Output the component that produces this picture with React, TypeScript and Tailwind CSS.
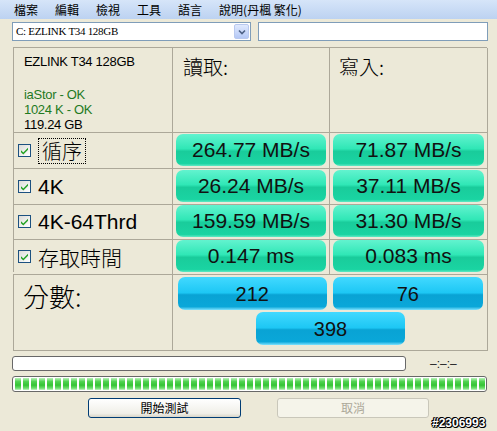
const SANS = "font-['Liberation_Sans','Noto_Sans_CJK_TC',sans-serif]"
const CJK = "font-['Noto_Sans_CJK_TC','Liberation_Sans',sans-serif]"

const rows = [
  { label: '循序', read: '264.77 MB/s', write: '71.87 MB/s', focus: true, cjk: true },
  { label: '4K', read: '26.24 MB/s', write: '37.11 MB/s' },
  { label: '4K-64Thrd', read: '159.59 MB/s', write: '31.30 MB/s' },
  { label: '存取時間', read: '0.147 ms', write: '0.083 ms', cjk: true },
]

const rowHeights = ['h-[36px]', 'h-[35px]', 'h-[35px]', 'h-[34px]']

function Check() {
  return (
    <span className="flex h-[13px] w-[13px] shrink-0 items-center justify-center border border-[#1c5180] bg-[linear-gradient(135deg,#dcdcd7,#ffffff)]">
      <svg width="9" height="9" viewBox="0 0 9 9">
        <path d="M1 4.2 L3.3 6.5 L8 1.8 L8 3.8 L3.3 8.5 L1 6.2 Z" fill="#21a121" />
      </svg>
    </span>
  )
}

function GreenBox({ value }: { value: string }) {
  return (
    <div className="flex h-full items-center justify-center rounded-[7px] bg-[linear-gradient(to_bottom,#62f3cf_0%,#30e7b6_46%,#19cc9b_54%,#1ad4a2_92%,#5fe9c4_100%)] text-[21px] text-[#111]">
      {value}
    </div>
  )
}

function BlueBox({ value }: { value: string }) {
  return (
    <div className="flex h-[33px] items-center justify-center rounded-[7px] bg-[linear-gradient(to_bottom,#42d9ff_0%,#1dc7f4_48%,#09a3d4_54%,#0aa7d9_90%,#7fe3ff_100%)] text-[20px] text-[#111]">
      {value}
    </div>
  )
}

export default function App() {
  const blocks = Array.from({ length: 59 })
  return (
    <div className={`relative h-[431px] w-[497px] overflow-hidden bg-[#ece9d8] ${SANS}`}>
      {/* menu */}
      <div className={`flex h-[19px] items-center gap-[17px] bg-[linear-gradient(to_bottom,#d6e5f9,#bcd2f1)] pl-[14px] text-[12px] text-black ${CJK}`}>
        <span>檔案</span>
        <span>編輯</span>
        <span>檢視</span>
        <span>工具</span>
        <span>語言</span>
        <span>說明(丹楓 繁化)</span>
      </div>

      {/* drive select + text */}
      <div className="mt-[3px] flex h-[19px] pl-[12px]">
        <div className="flex w-[239px] items-center border border-[#7f9db9] bg-white pl-[3px]">
          <span className="flex-1 font-['Liberation_Serif',serif] text-[11px] tracking-[-0.3px] text-black">
            C: EZLINK T34 128GB
          </span>
          <span className="mr-[1px] flex h-[15px] w-[15px] items-center justify-center rounded-[2px] border border-[#b9c9ef] bg-[linear-gradient(to_bottom,#e1eafe,#b4c8f6)]">
            <svg width="8" height="6" viewBox="0 0 8 6">
              <path d="M1 1.5 L4 4.5 L7 1.5" stroke="#4d6185" strokeWidth="1.6" fill="none" />
            </svg>
          </span>
        </div>
        <div className="ml-[7px] w-[230px] border border-[#7f9db9] bg-white" />
      </div>

      {/* results table */}
      <div className="ml-[13px] mt-[6px] w-[474px] border-l border-t border-[#aca899]">
        <div className="grid h-[84px] grid-cols-[159px_157px_158px]">
          <div className="border-b border-r border-[#aca899] pl-[10px] pt-[6px] text-[13px] leading-[15px] tracking-[-0.3px]">
            <div>EZLINK T34 128GB</div>
            <div className="mt-[18px] text-[#1f7a1f]">iaStor - OK</div>
            <div className="text-[#1f7a1f]">1024 K - OK</div>
            <div>119.24 GB</div>
          </div>
          <div className={`border-b border-r border-[#aca899] pl-[10px] pt-[4px] text-[20px] font-light ${CJK}`}>讀取:</div>
          <div className={`border-b border-r border-[#aca899] pl-[9px] pt-[4px] text-[20px] font-light ${CJK}`}>寫入:</div>
        </div>
        {rows.map((r, i) => (
          <div key={r.label} className={`grid grid-cols-[159px_157px_158px] ${rowHeights[i]}`}>
            <div className="flex items-center gap-[7px] border-b border-r border-[#aca899] pl-[4px] pt-[2px]">
              <Check />
              <span
                className={`leading-[24px] ${r.cjk ? `font-light ${CJK}` : ''} ${r.focus ? 'border border-dotted border-black px-[3px] text-[20px]' : 'text-[21px]'}`}
              >
                {r.label}
              </span>
            </div>
            <div className="border-b border-r border-[#aca899] px-[3px] py-[2px]">
              <GreenBox value={r.read} />
            </div>
            <div className="border-b border-r border-[#aca899] px-[3px] py-[2px]">
              <GreenBox value={r.write} />
            </div>
          </div>
        ))}
      </div>

      {/* score */}
      <div className="ml-[13px] mt-[2px] grid h-[77px] w-[474px] grid-cols-[159px_315px] border-l border-t border-[#aca899]">
        <div className={`border-b border-r border-[#aca899] pl-[9px] pt-[1px] text-[26px] font-light ${CJK}`}>分數:</div>
        <div className="flex flex-col items-center border-b border-r border-[#aca899] pt-[2px]">
          <div className="grid w-[305px] grid-cols-2 gap-[6px]">
            <BlueBox value="212" />
            <BlueBox value="76" />
          </div>
          <div className="ml-[1px] mt-[2px] w-[149px]">
            <BlueBox value="398" />
          </div>
        </div>
      </div>

      {/* progress */}
      <div className="ml-[12px] mt-[5px] flex h-[15px] items-center">
        <div className="h-[15px] w-[394px] rounded-[3px] border border-[#686868] bg-white" />
        <span className="ml-[24px] text-[12px] text-[#222]">–:–:–</span>
      </div>
      <div className="ml-[12px] mt-[5px] flex h-[16px] w-[475px] items-center gap-[2px] overflow-hidden rounded-[3px] border border-[#686868] bg-white px-[2px]">
        {blocks.map((_, i) => (
          <span
            key={i}
            className="h-[12px] w-[6px] shrink-0 bg-[linear-gradient(to_bottom,#b9f3b9_0%,#4fd24f_30%,#35c435_60%,#6ede6e_85%,#c4f5c4_100%)]"
          />
        ))}
      </div>

      {/* buttons */}
      <div className={`mt-[6px] flex h-[20px] text-[12px] ${CJK}`}>
        <button className="ml-[88px] w-[153px] rounded-[3px] border border-[#003c74] bg-[linear-gradient(to_bottom,#ffffff,#f0efe8_80%,#d8d5c8)] text-black">
          開始測試
        </button>
        <button className="ml-[36px] w-[152px] rounded-[3px] border border-[#c9c7ba] bg-[#f5f4ea] text-[#aca899]">
          取消
        </button>
      </div>

      <span className="absolute left-[432px] top-[414px] text-[12px] font-bold text-white [text-shadow:1px_0_0_#000,-1px_0_0_#000,0_1px_0_#000,0_-1px_0_#000,1px_1px_0_#000,-1px_-1px_0_#000]">
        #2306993
      </span>
    </div>
  )
}
